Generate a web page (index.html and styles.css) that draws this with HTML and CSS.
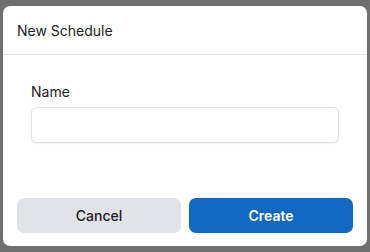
FILE: index.html
```html
<!DOCTYPE html>
<html lang="en">
<head>
<meta charset="utf-8">
<title>New Schedule</title>
<link rel="stylesheet" href="styles.css">
</head>
<body>
<div class="dialog">
  <div class="dialog-header">New Schedule</div>
  <div class="dialog-body">
    <label class="field-label" for="name">Name</label>
    <input class="field-input" id="name" type="text">
  </div>
  <div class="dialog-footer">
    <button class="btn btn-secondary">Cancel</button>
    <button class="btn btn-primary">Create</button>
  </div>
</div>
</body>
</html>
```
FILE: styles.css
```css
html, body {
  margin: 0;
  height: 100%;
}
body {
  background: #6f6f6f;
  padding: 6px 3px;
  box-sizing: border-box;
  font-family: Inter, "Noto Sans", sans-serif;
  color: #1c1c1e;
}
.dialog {
  width: 364px;
  height: 240px;
  background: #ffffff;
  border-radius: 7px;
  display: flex;
  flex-direction: column;
  overflow: hidden;
}
.dialog-header {
  height: 49px;
  box-sizing: border-box;
  display: flex;
  align-items: center;
  padding: 1px 14px 0;
  font-size: 14px;
  border-bottom: 1px solid #e3e3e6;
  flex: none;
}
.dialog-body {
  flex: 1;
  padding: 28px 28px 0;
  display: flex;
  flex-direction: column;
}
.field-label {
  font-size: 14px;
  line-height: 17px;
  margin-bottom: 7px;
}
.field-input {
  height: 36px;
  box-sizing: border-box;
  border: 1px solid #e0e0e5;
  border-radius: 6px;
  box-shadow: 0 1px 2px rgba(0, 0, 0, 0.06);
  padding: 0 10px;
  font-family: inherit;
  font-size: 14px;
  outline: none;
  width: 100%;
}
.dialog-footer {
  display: flex;
  gap: 8px;
  padding: 0 14px 13px;
  flex: none;
}
.btn {
  flex: 1;
  height: 35px;
  border: none;
  border-radius: 7px;
  font-family: inherit;
  font-size: 14px;
}
.btn-secondary {
  background: #e2e3e8;
  color: #1c1c1e;
  font-weight: 500;
}
.btn-primary {
  background: #1269c3;
  color: #ffffff;
  font-weight: 600;
}
```
